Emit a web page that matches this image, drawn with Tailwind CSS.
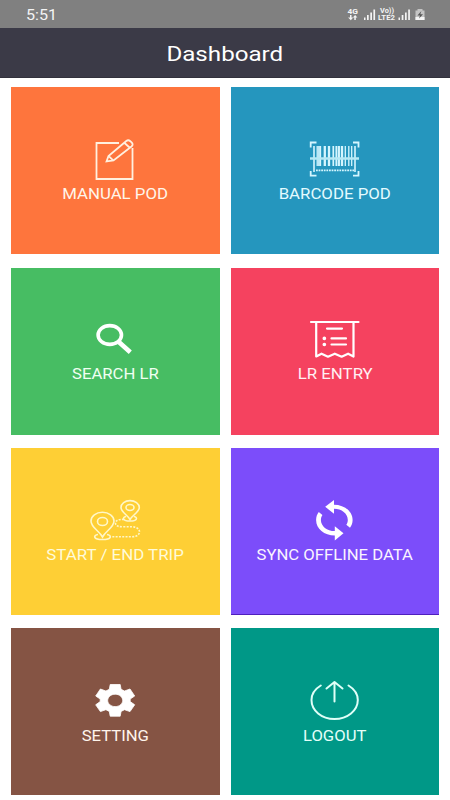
<!DOCTYPE html>
<html lang="en">
<head>
<meta charset="utf-8">
<title>Dashboard</title>
<script src="https://cdn.jsdelivr.net/npm/@tailwindcss/browser@4"></script>
</head>
<body class="w-[450px] h-[800px] overflow-hidden bg-white font-[Roboto,sans-serif] text-white">
<div class="h-[28px] bg-[#808080] flex items-center justify-between pl-[26px] pr-[25px]">
  <span class="text-[14px] leading-none origin-left scale-x-[1.15] pt-[2px] text-[#f4f4f4]">5:51</span>
  <svg class="w-[79px] h-[28px]" viewBox="346 0 79 28" fill="#f4f4f4" font-family="Roboto, sans-serif" font-weight="700">
    <text x="347.5" y="14" font-size="7" textLength="10.500" lengthAdjust="spacingAndGlyphs">4G</text>
    <path d="M350 15v2.400h-1.900l2.700 2.800 2.500-2.800h-1.800V15zM354.300 20v-2.400h-1.400l2.200-2.600 2.300 2.600h-1.600V20z"/>
    <path d="M364 17.500h1.500V20H364zM367 15h1.700v5H367zM370.300 12.500h1.700V20h-1.700zM373.400 9.500h1.700V20h-1.700z"/>
    <text x="380" y="13.300" font-size="6.300" textLength="14" lengthAdjust="spacingAndGlyphs">Vo))</text>
    <text x="378" y="20" font-size="6.500" textLength="17" lengthAdjust="spacingAndGlyphs">LTE2</text>
    <path d="M398.500 17.500h1.500V20h-1.500zM401.700 15h1.700v5h-1.700zM405 12.500h1.700V20H405zM408.200 9.500h1.700V20h-1.700z"/>
    <path d="M417.500 9h5v1.500h2V20h-9v-9.500h2z" fill="#c4c4c4"/>
    <path d="M415.500 17h9v3h-9z"/>
    <path d="M421.400 11l-4 4.600h2.600l-1 3 4-4.400h-2.700z" fill="#555"/>
  </svg>
</div>
<header class="h-[50px] bg-[#3b3a47] border-b border-[#32313c] flex items-center justify-center">
  <h1 class="text-[21px] leading-none scale-x-[1.15] pt-[4px]">Dashboard</h1>
</header>
<main class="grid grid-cols-2 gap-x-[11px] gap-y-[13.300px] px-[10.700px] pt-[9.300px] text-[14px] leading-[14px]">
  <section class="h-[167px] pt-[46.700px] flex flex-col items-center bg-[#fe753d]">
    <svg class="w-[70px] h-[50px]" viewBox="80 134 70 50" fill="none" stroke="#fff0df" stroke-width="1.800">
      <path d="M119 143H96.500v36h36v-31"/>
      <path d="M106.500 161.500l2-5.500 17.800-15q2-1.500 4 .2l1.500 1.500q1.800 2-.3 3.800L113.500 160.500zM124 142.500l5.500 5M109 156.300l4.200 4"/>
    </svg>
    <span class="mt-[3.500px] whitespace-nowrap text-[#fff5ea] scale-x-[1.200]">MANUAL POD</span>
  </section>
  <section class="h-[167px] pt-[46.700px] flex flex-col items-center bg-[#2596be]">
    <svg class="w-[70px] h-[50px]" viewBox="300 134 70 50" fill="none" stroke="#d5f6ff">
      <path stroke-width="1.800" d="M310.700 147.500v-5h5.800M353 142.500h5.500v5M310.700 171v4.700h5.800M353 175.700h5.500V171"/>
      <path stroke-width="1.600" d="M314 146v26M355 146v26"/>
      <path stroke-width="1.300" d="M317.200 146v20M320.500 146v20M345.300 146v20M348.800 146v20M351.700 146v20"/>
      <path stroke-width="2.300" d="M324.800 146v20M329 146v20M338.800 146v20M342 146v20"/>
      <path stroke-width="1.700" d="M319 146v20M333.300 146v20M336.300 146v20"/>
      <path stroke-width="2.400" stroke="#b5e9f5" d="M310 158.500h49"/>
      <path stroke-width="1.800" stroke-dasharray="1.800 .8" d="M316 170.300h38"/>
    </svg>
    <span class="mt-[3.500px] whitespace-nowrap text-[#e4fbff] scale-x-[1.200]">BARCODE POD</span>
  </section>
  <section class="h-[167px] pt-[46.400px] flex flex-col items-center bg-[#47bd63]">
    <svg class="w-[70px] h-[50px]" viewBox="80 314 70 50" fill="none" stroke="#fff">
      <ellipse cx="109.800" cy="335" rx="11.700" ry="9.400" stroke-width="3.600"/>
      <path d="M118.300 341.500L130.300 352.300" stroke-width="4.600"/>
    </svg>
    <span class="mt-[3.500px] whitespace-nowrap text-[#f0fff2] scale-x-[1.190]">SEARCH LR</span>
  </section>
  <section class="h-[167px] pt-[46.400px] flex flex-col items-center bg-[#f5425f]">
    <svg class="w-[70px] h-[50px]" viewBox="300 314 70 50" fill="none" stroke="#fff" stroke-width="2.200" stroke-linecap="round" stroke-linejoin="round">
      <path d="M311 322h47.500M316.200 322v34.500l5.300-2.800 6.500 3 6.800-3 6.800 3 6.500-3 5.400 2.800V322M327 328.600h15M331.500 338.400h14.500M331.500 344.500h14.500"/>
      <path d="M324.300 338.400h.1M324.300 344.500h.1" stroke-width="3.600"/>
    </svg>
    <span class="mt-[3.500px] whitespace-nowrap text-[#fff0f3] scale-x-[1.200]">LR ENTRY</span>
  </section>
  <section class="h-[167px] pt-[46.100px] flex flex-col items-center bg-[#fecf35]">
    <svg class="w-[70px] h-[50px]" viewBox="80 494 70 50" fill="none" stroke="#fff7c8" stroke-width="1.600">
      <path d="M102.500 537C99 530.500 91 527.500 91 521c0-5 5-8.700 11.400-8.700s11.600 3.700 11.600 8.700c0 6.500-8 9.500-11.500 16z"/>
      <ellipse cx="102.500" cy="521.500" rx="5" ry="4"/>
      <path d="M98 534.500c-5 .8-5 5 4.500 5s9.500-4.200 4.500-5"/>
      <path d="M130 519.500c-2.500-4.500-9-7.500-9-12 0-4 4-6.900 9-6.900s9.300 2.900 9.300 6.900c0 4.500-6.800 7.500-9.300 12z"/>
      <ellipse cx="130" cy="507.500" rx="4" ry="3"/>
      <path d="M126 516.500c-4 .8-3.500 4.500 4 4.500s8-3.700 4-4.500"/>
      <path stroke-dasharray="2 1.300" d="M124 519.500c-5-.5-8.500 1-8.500 3.500 0 3.500 4 3.800 8.500 3.800h8c10 0 10 10 0 10h-22"/>
    </svg>
    <span class="mt-[3.900px] whitespace-nowrap text-[#fffbd9] scale-x-[1.205]">START / END TRIP</span>
  </section>
  <section class="h-[167px] pt-[46.100px] flex flex-col items-center bg-[#7c4dfa] border-b border-[#4f1fbd]">
    <svg class="w-[70px] h-[50px]" viewBox="300 494 70 50">
      <path fill="#fff" d="M334 500v4.700c10 0 18.600 6.400 18.600 15.200 0 3-1 5.600-2.600 7.800l-3.700-2.900c1-1.500 1.500-3.100 1.500-4.900 0-6.300-6.200-11.100-13.800-11.100v5l-8.800-7zM334.800 540.400v-5c-10.500 0-18.700-6.700-18.700-15.500 0-3 1-5.600 2.700-7.800l3.600 2.900c-1 1.500-1.500 3.200-1.500 4.900 0 6.200 6 11.100 13.900 11.100v-4.800l8.700 7z"/>
    </svg>
    <span class="mt-[3.900px] whitespace-nowrap text-[#faf4ff] scale-x-[1.190]">SYNC OFFLINE DATA</span>
  </section>
  <section class="h-[167px] pt-[45.800px] flex flex-col items-center bg-[#855444]">
    <svg class="w-[70px] h-[50px]" viewBox="80 674 70 50">
      <path fill="#fff" fill-rule="evenodd" stroke="#fff" stroke-width=".8" stroke-linejoin="round" d="M110.200 684.500h10l.9 4.800 3.400 1.700 5.500-2 4.700 7-4.500 3v2.600l4.500 3.200-4.700 6.800-5.500-1.900-3.400 1.700-.9 4.800h-10l-.9-4.800-3.400-1.700-5.500 1.900-4.700-6.800 4.500-3.200V699l-4.500-3 4.700-7 5.500 2 3.400-1.700zM115.200 694.200c-4.200 0-7.500 2.800-7.500 6.200s3.300 6.200 7.500 6.200 7.500-2.800 7.500-6.200-3.300-6.200-7.500-6.200z"/>
    </svg>
    <span class="mt-[5px] whitespace-nowrap text-[#fff5ec] scale-x-[1.190]">SETTING</span>
  </section>
  <section class="h-[167px] pt-[45.800px] flex flex-col items-center bg-[#009887]">
    <svg class="w-[70px] h-[50px]" viewBox="300 674 70 50" fill="none" stroke="#e0fff8" stroke-width="2" stroke-linecap="round" stroke-linejoin="round">
      <path d="M320.800 685.500C315 689 311.500 694 311.500 700c0 10.500 10 19 23 19s23.300-8.500 23.300-19c0-6-3.600-11-9.300-14.500M334.500 701.500v-19.500M326.500 688.500l8-6.500 8 6.500"/>
    </svg>
    <span class="mt-[5px] whitespace-nowrap text-[#e4fff9] scale-x-[1.190]">LOGOUT</span>
  </section>
</main>
</body>
</html>
